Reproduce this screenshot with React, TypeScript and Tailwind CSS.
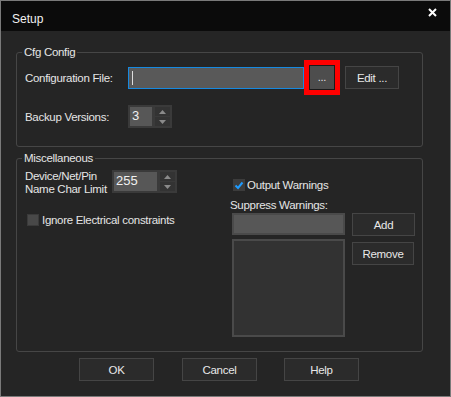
import React from "react";

const font = { fontFamily: '"Liberation Sans", Arial, sans-serif' };

function Spin({ value, textW }: { value: string; textW: string }) {
  return (
    <div className="flex h-[23px] items-stretch gap-[3px] bg-[#3a3a3a] p-[2px]">
      <div className={`${textW} bg-[#575757] pl-[2px] text-[13px] leading-[17px] tracking-normal text-[#f0f0f0]`}>{value}</div>
      <div className="flex w-[15px] flex-col gap-[1px]">
        <div className="flex flex-1 items-center justify-center bg-[#333333]">
          <svg width="7" height="4" viewBox="0 0 7 4"><path d="M0 4 L3.5 0 L7 4Z" fill="#8a8a8a" /></svg>
        </div>
        <div className="flex flex-1 items-center justify-center bg-[#333333]">
          <svg width="7" height="4" viewBox="0 0 7 4"><path d="M0 0 L3.5 4 L7 0Z" fill="#8a8a8a" /></svg>
        </div>
      </div>
    </div>
  );
}

function Btn({ children, cls }: { children: React.ReactNode; cls: string }) {
  return (
    <div className={`${cls} flex h-[23px] items-center justify-center border border-[#454545] bg-[#2b2b2b] text-[#e8e8e8]`}>
      {children}
    </div>
  );
}

function Group({ title, cls, children }: { title: string; cls: string; children: React.ReactNode }) {
  return (
    <div className={`relative ${cls} w-[407px] rounded-[3px] border border-[#464646]`}>
      <span className="absolute -top-[8px] left-[5px] bg-[#252525] px-[2px] leading-[14px] text-[#e6e6e6]">
        {title}
      </span>
      {children}
    </div>
  );
}

export default function App() {
  return (
    <div style={font} className="flex h-[397px] w-[451px] flex-col border border-[#7a7a7a] bg-[#252525] text-[11.5px] leading-[14px] tracking-[-0.3px] text-[#e6e6e6]">
      <div className="flex h-[30px] items-start justify-between bg-[#0b0b0b] pl-[11px] pr-[13px]">
        <span className="mt-[11px] text-[12px] tracking-normal text-[#f2f2f2]">Setup</span>
        <svg width="9" height="9" viewBox="0 0 9 9" className="mt-[7px]">
          <path d="M1 1 L8 8 M8 1 L1 8" stroke="#ffffff" strokeWidth="2" />
        </svg>
      </div>
      <div className="flex flex-col pl-[15px]">
        <Group title="Cfg Config" cls="mt-[21px] h-[95px]">
          <div className="mt-[7px] flex items-center pl-[8px]">
            <span className="w-[103px]">Configuration File:</span>
            <div className="relative h-[22px] w-[176px] border border-[#1689e0] bg-[#595959]">
              <div className="absolute left-[3px] top-[3px] h-[14px] w-[1px] bg-[#dddddd]" />
            </div>
            <div className="h-[35px] w-[36px] border-[5px] border-[#ff0000]">
              <div className="flex h-full w-full items-center justify-center border border-[#1a1a1a] bg-[#4d4d4d] pb-[2px] text-[11px] text-[#e0e0e0]">
                ...
              </div>
            </div>
            <Btn cls="ml-[5px] w-[54px]">Edit ...</Btn>
          </div>
          <div className="mt-[10px] flex items-center pl-[8px]">
            <span className="w-[103px]">Backup Versions:</span>
            <Spin value="3" textW="w-[22px]" />
          </div>
        </Group>
        <Group title="Miscellaneous" cls="mt-[11px] h-[194px]">
          <div className="flex pl-[8px] pt-[11px]">
            <div className="flex w-[205px] flex-col">
              <div className="flex items-start">
                <div className="w-[87px] whitespace-nowrap leading-[13px]">
                  Device/Net/Pin
                  <br />
                  Name Char Limit
                </div>
                <Spin value="255" textW="w-[43px]" />
              </div>
              <div className="mt-[18px] flex h-[12px] items-center pl-[2px]">
                <div className="h-[12px] w-[12px] border border-[#3a3a3a] bg-[#484848]" />
                <span className="ml-[3px]">Ignore Electrical constraints</span>
              </div>
            </div>
            <div className="flex flex-col">
              <div className="mt-[9px] flex h-[12px] items-center pl-[3px]">
                <div className="flex h-[12px] w-[12px] items-center justify-center bg-[#3c3c3c]">
                  <svg width="10" height="9" viewBox="0 0 10 9">
                    <path d="M1.5 4.5 L4 7 L8.5 1.5" stroke="#1e9bff" strokeWidth="2" fill="none" />
                  </svg>
                </div>
                <span className="ml-[2px]">Output Warnings</span>
              </div>
              <span className="mt-[7px]">Suppress Warnings:</span>
              <div className="mt-[1px] flex gap-[7px] pl-[2px]">
                <div className="flex flex-col gap-[4px]">
                  <div className="h-[22px] w-[113px] border-2 border-[#4a4a4a] bg-[#575757]" />
                  <div className="h-[98px] w-[113px] border-2 border-[#4a4a4a] bg-[#323232]" />
                </div>
                <div className="flex flex-col gap-[6px]">
                  <Btn cls="w-[63px] h-[22px]">Add</Btn>
                  <Btn cls="w-[62px]">Remove</Btn>
                </div>
              </div>
            </div>
          </div>
        </Group>
      </div>
      <div className="mt-[6px] flex pl-[78px]">
        <Btn cls="w-[75px]">OK</Btn>
        <Btn cls="ml-[28px] w-[75px]">Cancel</Btn>
        <Btn cls="ml-[27px] w-[75px]">Help</Btn>
      </div>
    </div>
  );
}
